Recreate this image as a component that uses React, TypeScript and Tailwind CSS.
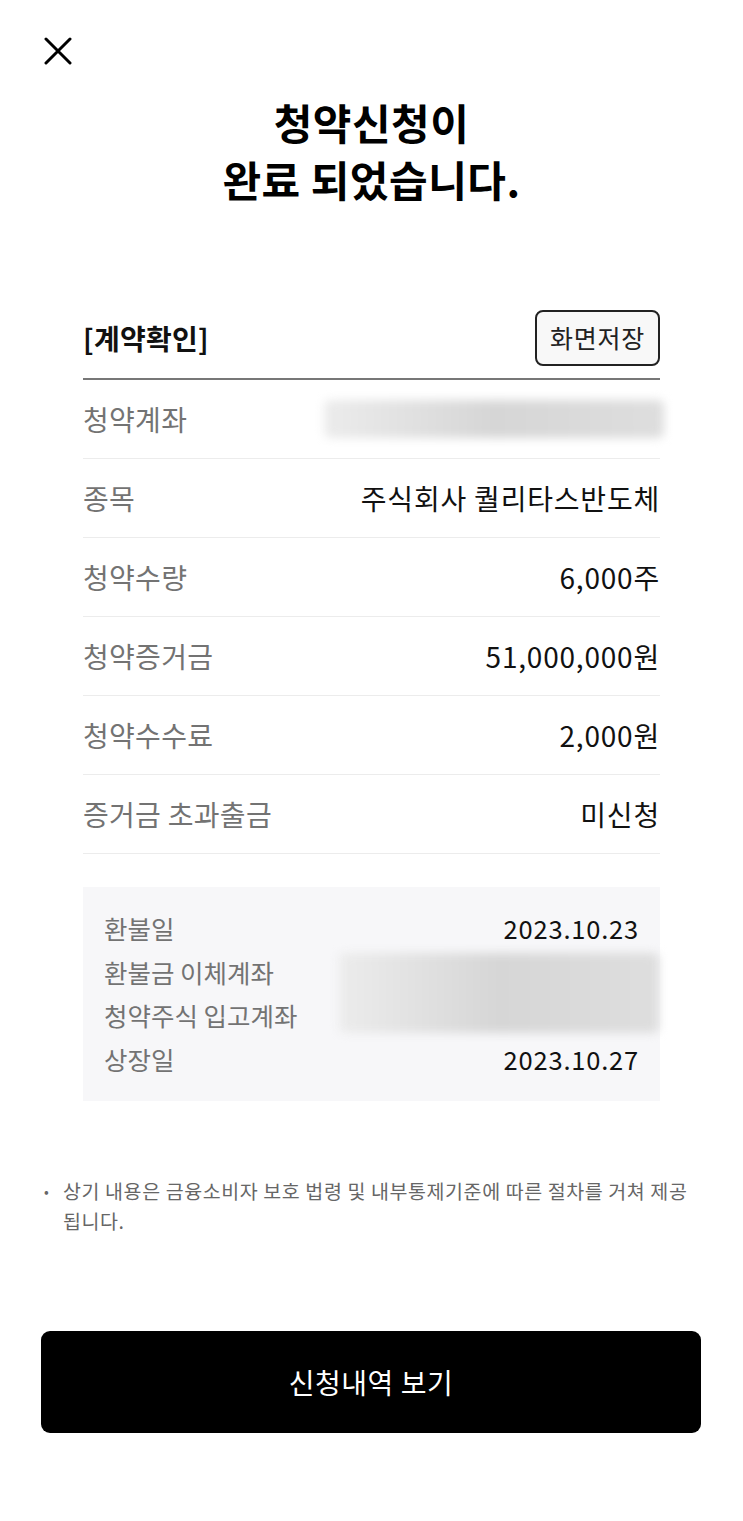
const rows = [
  { label: "종목", value: "주식회사 퀄리타스반도체" },
  { label: "청약수량", value: "6,000주" },
  { label: "청약증거금", value: "51,000,000원" },
  { label: "청약수수료", value: "2,000원" },
  { label: "증거금 초과출금", value: "미신청" },
];

function Blurred({ className }: { className: string }) {
  return (
    <div
      className={`rounded-md bg-gradient-to-r from-[#ececec] via-[#d6d6d6] to-[#dedede] blur-[5px] ${className}`}
    />
  );
}

export default function App() {
  return (
    <div
      className="min-h-[1521px] w-[743px] bg-white"
      style={{ fontFamily: '"Noto Sans CJK KR", "Noto Sans", sans-serif' }}
    >
      {/* close */}
      <div className="pl-[44px] pt-[37px]">
        <svg width="28" height="28" viewBox="0 0 28 28" fill="none">
          <path d="M2 2L26 26M26 2L2 26" stroke="#000" strokeWidth="3" strokeLinecap="round" />
        </svg>
      </div>

      <h1 className="mt-[28px] text-center text-[42px] font-bold leading-[57px] tracking-[0.5px] text-black">
        청약신청이
        <br />
        완료 되었습니다.
      </h1>

      <div className="mx-[83px] mt-[103px] w-[577px]">
        {/* header */}
        <div className="flex items-center justify-between border-b-2 border-[#777] pb-[12px]">
          <span className="text-[28px] font-bold tracking-[0.3px] text-[#111]">[계약확인]</span>
          <button className="flex h-[56px] w-[125px] items-center justify-center rounded-[8px] border-2 border-[#222] bg-[#f8f8f8] text-[25px] tracking-[0.8px] text-[#222]">
            화면저장
          </button>
        </div>

        {/* rows */}
        <div className="flex h-[79px] items-center justify-between border-b border-[#ececec]">
          <span className="text-[28px] tracking-[0.3px] text-[#737373]">청약계좌</span>
          <Blurred className="mr-[-4px] h-[38px] w-[340px]" />
        </div>
        {rows.map((r) => (
          <div
            key={r.label}
            className="flex h-[79px] items-center justify-between border-b border-[#ececec]"
          >
            <span className="text-[28px] tracking-[0.3px] text-[#737373]">{r.label}</span>
            <span className="text-[28px] tracking-[0.8px] text-[#111]">{r.value}</span>
          </div>
        ))}

        {/* refund box */}
        <div className="mt-[33px] bg-[#f7f7f9] px-[21px] pb-[21px] pt-[19px] text-[25.5px] leading-[43.5px]">
          <div className="flex justify-between">
            <span className="text-[#737373]">환불일</span>
            <span className="tracking-[0.8px] text-[#111]">2023.10.23</span>
          </div>
          <div className="flex h-[87px] justify-between">
            <div className="flex flex-col">
              <span className="text-[#737373]">환불금 이체계좌</span>
              <span className="text-[#737373]">청약주식 입고계좌</span>
            </div>
            <div className="mr-[-20px] flex items-center">
              <Blurred className="h-[80px] w-[320px]" />
            </div>
          </div>
          <div className="flex justify-between">
            <span className="text-[#737373]">상장일</span>
            <span className="tracking-[0.8px] text-[#111]">2023.10.27</span>
          </div>
        </div>
      </div>

      {/* notice */}
      <div className="mt-[75px] flex pl-[44px] pr-[30px] text-[19.5px] leading-[30px] tracking-[0.6px] text-[#666]">
        <span className="w-[19px] shrink-0 text-[14px]">•</span>
        <p>
          상기 내용은 금융소비자 보호 법령 및 내부통제기준에 따른 절차를 거쳐 제공
          <br />
          됩니다.
        </p>
      </div>

      <div className="mt-[95px] px-[41px]">
        <button className="flex h-[102px] w-[660px] items-center justify-center rounded-[9px] bg-black text-[28px] tracking-[0.5px] text-white">
          신청내역 보기
        </button>
      </div>
    </div>
  );
}
